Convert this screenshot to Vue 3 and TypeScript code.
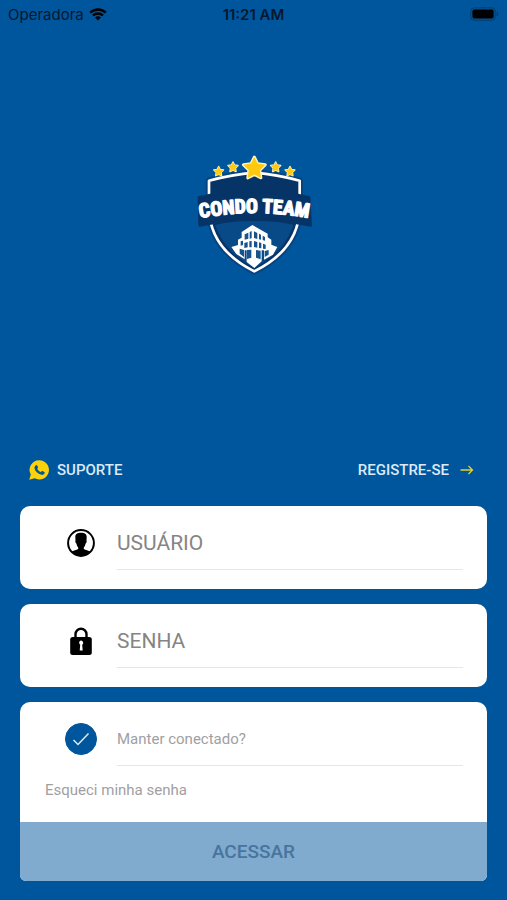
<script setup lang="ts">
import { ref } from 'vue'

const username = ref('')
const password = ref('')
const keepConnected = ref(true)

const starPath = 'M0-10 3-4 10-3 5 2 6 9 0 6-6 9-5 2-10-3-3-4Z'
const stars = [
  { x: 115, y: 94, size: 1.45, line: 3 },
  { x: 158, y: 81, size: 1.5, line: 3 },
  { x: 286, y: 81, size: 1.5, line: 3 },
  { x: 329, y: 94, size: 1.45, line: 3 },
  { x: 222, y: 84, size: 3.3, line: 2.6 },
]
</script>

<template>
  <div class="page">
    <header class="status">
      <span class="carrier">
        Operadora
        <svg class="wifi" viewBox="0 0 18 13" aria-hidden="true">
          <path d="M1.2 4.7a11.2 11.2 0 0 1 15.6 0" />
          <path d="M4 7.5a7.2 7.2 0 0 1 10 0" />
          <path class="solid" d="M9 12.6 6 9.6a4.3 4.3 0 0 1 6 0Z" />
        </svg>
      </span>
      <span class="clock">11:21 AM</span>
      <svg class="battery" viewBox="0 0 29 14" aria-hidden="true">
        <rect class="shell" x="0.8" y="0.8" width="24.4" height="12.4" rx="3.5" />
        <rect x="2.4" y="2.4" width="21.2" height="9.2" rx="1.8" />
        <path class="tip" d="M26.6 4.6c2.2.7 2.2 4.1 0 4.8Z" />
      </svg>
    </header>

    <main class="content">
      <div class="hero">
        <svg class="logo" viewBox="-4 0 450 435" role="img" aria-label="Condo Team">
          <path class="halo" d="M86 122Q155 104 222 98 290 104 358 122V200C358 285 310 350 222 394 134 350 86 285 86 200Z" />
          <path class="shield" d="M86 122Q155 104 222 98 290 104 358 122V200C358 285 310 350 222 394 134 350 86 285 86 200Z" />
          <path class="lower" d="M105 255Q222 225 339 255C320 312 283 349 222 385 161 349 124 312 105 255Z" />
          <g class="building">
            <path d="M216 255 262 281V292L273 299V314L291 321 278 344 251 359V331H244V364L222 384 199 366V331H193V358L168 342 153 321 173 315V299L184 293V276Z" />
            <path class="windows" d="M193 283 204 278V296L193 299ZM208 276 214 273V295L208 296ZM221 274 231 279V297L221 294ZM236 281 242 284V299L236 298ZM247 287 254 291V302L247 300ZM181 304 188 302V315L181 317ZM192 309 202 306V322L192 324ZM207 304 214 303V322L207 322ZM221 303 231 306V323L221 321ZM236 307 243 309V325L236 324ZM248 311 256 314V327L248 326ZM178 326 191 330V351L178 341ZM200 330 213 329V353L200 357ZM227 330 241 332V358L227 353ZM253 333 265 330V344L253 351Z" />
          </g>
          <g v-for="star in stars" :key="star.x" :transform="`translate(${star.x} ${star.y}) scale(${star.size})`">
            <path class="star" :d="starPath" :stroke-width="star.line" />
          </g>
          <path class="ribbon" d="M56 172Q222 134 386 172L391 256Q222 222 58 256Z" />
          <defs>
            <path id="nameArc" d="M40 238Q222 200 404 238" />
          </defs>
          <text class="name"><textPath href="#nameArc" startOffset="50%">CONDO TEAM</textPath></text>
        </svg>
      </div>

      <nav class="links">
        <a class="link" href="#suporte">
          <svg class="chat" viewBox="0 0 20 20" aria-hidden="true">
            <path d="M10.3.3a9.6 9.6 0 1 1-4.6 18L.2 19.8 1.8 14.6A9.6 9.6 0 0 1 10.3.3Z" />
            <path class="phone" d="M6.8 5.2c.5-.5 1.1-.4 1.4.2l.8 1.8c.2.5-.1.9-.8 1.6.8 1.6 2 2.7 3.6 3.4.9-1.1 1.1-1.3 1.6-1.1l1.9.9c.6.3.5.7.2 1.4-.4 1.1-1.9 1.7-3.1 1.4-3.5-.8-6.3-3.6-6.9-6.5-.2-1.1.4-2.3 1.3-3.1Z" />
          </svg>
          SUPORTE
        </a>
        <a class="link" href="#registro">
          REGISTRE-SE
          <svg class="arrow" viewBox="0 0 14 10" aria-hidden="true">
            <path d="M.5 5h12M8.5 1l4 4-4 4" />
          </svg>
        </a>
      </nav>

      <form class="form" @submit.prevent>
        <div class="card row">
          <label class="icon" for="username">
            <svg viewBox="0 0 28 28" role="img" aria-label="Usuário">
              <circle class="ring" cx="14" cy="14" r="12.9" />
              <path d="M8.3 8C8.3 5 10.5 3.8 14 3.8S19.7 5 19.7 8L19.5 11.5C19.9 13 19.3 14 18.6 14.5 18.2 16.5 17.6 17.6 16.8 18.4V20C18.6 21.3 21.5 21.5 23.4 22.6A12.7 12.7 0 0 1 4.6 22.6C6.5 21.5 9.4 21.3 11.2 20V18.4C10.4 17.6 9.8 16.5 9.4 14.5 8.7 14 8.1 13 8.5 11.5Z" />
            </svg>
          </label>
          <input id="username" v-model="username" class="field" type="text" placeholder="USUÁRIO" autocomplete="username" />
        </div>

        <div class="card row">
          <label class="icon" for="password">
            <svg viewBox="0 0 28 28" role="img" aria-label="Senha">
              <path class="shackle" d="M8.5 11V7.200a5.500 5.500 0 0 1 11 0V11" />
              <rect x="3.2" y="10" width="21.6" height="18" rx="2.5" />
              <path class="keyhole" d="M14 13.5a2.3 2.3 0 0 1 1.2 4.2l.5 5.800h-3l.5-5.800A2.300 2.300 0 0 1 14 13.500Z" />
            </svg>
          </label>
          <input id="password" v-model="password" class="field" type="password" placeholder="SENHA" autocomplete="current-password" />
        </div>

        <div class="card">
          <div class="row">
            <span class="icon check">
              <input id="keep" v-model="keepConnected" class="box" type="checkbox" />
              <svg v-if="keepConnected" class="tick" viewBox="0 0 18 14" aria-hidden="true">
                <path d="M1.5 8 6 12.5 16.5 1.5" />
              </svg>
            </span>
            <label class="field keep" for="keep">Manter conectado?</label>
          </div>
          <a class="forgot" href="#senha">Esqueci minha senha</a>
          <button class="submit" type="submit">ACESSAR</button>
        </div>
      </form>
    </main>
  </div>
</template>

<style>
body {
  background: #00569d;
}
</style>

<style scoped>
.page {
  display: flex;
  flex-direction: column;
  min-height: 100vh;
  box-sizing: border-box;
  padding-bottom: 19px;
  background: #00569d;
  font-family: Roboto, 'Liberation Sans', sans-serif;
}

.status {
  display: grid;
  grid-template-columns: 1fr auto 1fr;
  align-items: center;
  height: 28px;
  padding: 0 8px;
  color: #06182e;
  font: 15px Inter, 'Liberation Sans', sans-serif;
}

.carrier {
  display: flex;
  align-items: center;
  gap: 5px;
}

.wifi {
  width: 18px;
  height: 13px;
  fill: none;
  stroke: #000;
  stroke-width: 2.4;
}

.wifi .solid {
  fill: #000;
  stroke: none;
}

.clock {
  font-weight: 600;
}

.battery {
  justify-self: end;
  width: 29px;
  height: 14px;
}

.battery .shell {
  fill: none;
  stroke: #063a69;
  stroke-width: 1;
}

.battery .tip {
  fill: #063a69;
}

.content {
  display: flex;
  flex: 1;
  flex-direction: column;
}

.hero {
  display: flex;
  flex: 1;
  align-items: center;
  justify-content: center;
  padding-bottom: 64px;
}

.logo {
  width: 150px;
  height: 145px;
}

.halo {
  fill: none;
  stroke: #064480;
  stroke-width: 20;
  stroke-linejoin: round;
}

.shield {
  fill: #073467;
  stroke: #fff;
  stroke-width: 8;
  stroke-linejoin: round;
}

.lower {
  fill: #084987;
}

.building {
  fill: #fff;
}

.building .windows {
  fill: #17548d;
}

.star {
  fill: #ffc910;
  stroke: #fff4bf;
  stroke-linejoin: round;
  paint-order: stroke;
}

.ribbon {
  fill: #073467;
  stroke: #073467;
  stroke-width: 8;
  stroke-linejoin: round;
}

.name {
  fill: #fff;
  stroke: #fff;
  stroke-width: 4;
  stroke-linejoin: round;
  font-family: 'Roboto Condensed', 'Liberation Sans Narrow', 'Liberation Sans', sans-serif;
  font-size: 59px;
  font-weight: 700;
  text-anchor: middle;
}

.links {
  display: flex;
  align-items: center;
  justify-content: space-between;
  padding: 0 33px 0 29px;
}

.link {
  display: flex;
  align-items: center;
  gap: 8px;
  color: #dce9f6;
  font-size: 15px;
  font-weight: 500;
  line-height: 20px;
  text-decoration: none;
}

.chat {
  width: 20px;
  height: 20px;
  fill: #fbd20b;
}

.chat .phone {
  fill: #00569d;
}

.arrow {
  width: 14px;
  height: 10px;
  margin-left: 3px;
  fill: none;
  stroke: #e3d22d;
  stroke-width: 1.3;
}

.form {
  display: flex;
  flex-direction: column;
  gap: 15px;
  padding: 26px 20px 0;
}

.card {
  overflow: hidden;
  border-radius: 10px 10px 6px 6px;
  background: #fff;
}

.card.row {
  border-radius: 10px;
  padding-bottom: 19px;
}

.row {
  display: grid;
  grid-template-columns: 32px 1fr;
  gap: 20px;
  padding: 9px 24px 0 45px;
}

.icon {
  display: grid;
  place-items: center;
}

.icon svg {
  width: 28px;
  height: 28px;
}

.ring {
  fill: none;
  stroke: #000;
  stroke-width: 2;
}

.shackle {
  fill: none;
  stroke: #000;
  stroke-width: 2.4;
}

.keyhole {
  fill: #fff;
}

.field {
  box-sizing: border-box;
  width: 100%;
  min-width: 0;
  height: 55px;
  padding: 2px 0 0;
  border: 0;
  border-bottom: 1px solid #e6e6e6;
  border-radius: 0;
  outline: 0;
  background: transparent;
  color: #333;
  font: 21px Roboto, 'Liberation Sans', sans-serif;
}

.field::placeholder {
  color: #858585;
  opacity: 1;
}

.keep {
  color: #a0a0a3;
  font-size: 15px;
  line-height: 52px;
}

.check > * {
  grid-area: 1 / 1;
}

.box {
  width: 32px;
  height: 32px;
  margin: 0;
  border: 1px solid #00569d;
  border-radius: 50%;
  appearance: none;
}

.box:checked {
  background: #00569d;
}

.check .tick {
  width: 18px;
  height: 14px;
  fill: none;
  stroke: #dcebf8;
  stroke-width: 1.5;
  pointer-events: none;
}

.forgot {
  display: block;
  padding: 14px 25px 22px;
  color: #a0a0a3;
  font-size: 15px;
  line-height: 20px;
  text-decoration: none;
}

.submit {
  display: block;
  width: 100%;
  height: 59px;
  padding: 0;
  border: 0;
  background: #80aace;
  color: #48749d;
  font: 500 19px Roboto, 'Liberation Sans', sans-serif;
}
</style>
